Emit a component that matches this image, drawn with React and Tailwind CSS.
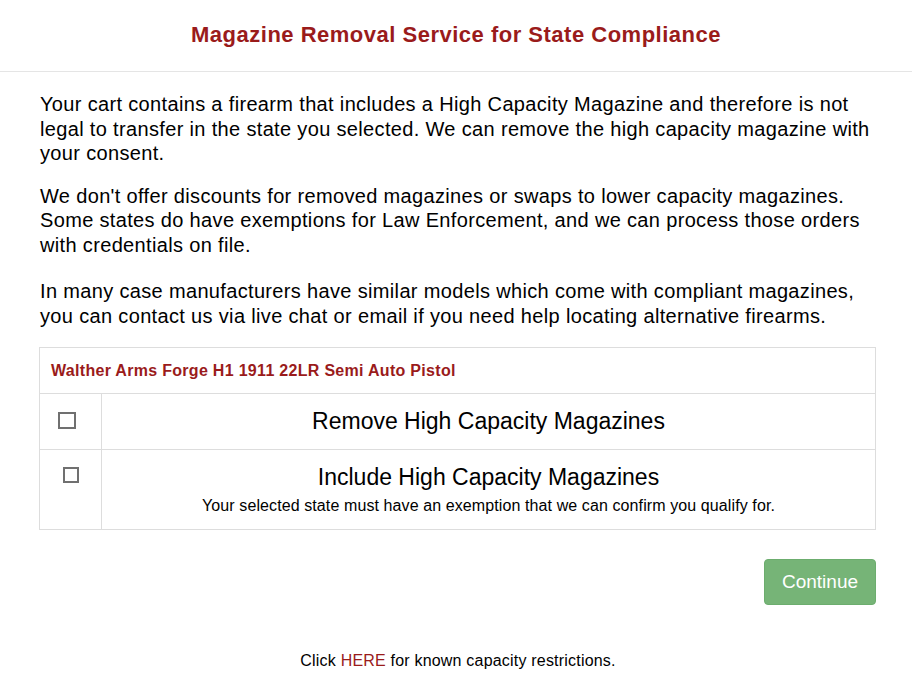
export default function App() {
  return (
    <div className="min-h-screen bg-white text-black" style={{ fontFamily: '"Liberation Sans", Arial, sans-serif' }}>
      {/* Header */}
      <div className="h-[72px] flex items-center justify-center border-b border-[#e5e5e5]">
        <h1 className="text-[22px] tracking-[0.5px] font-bold text-[#9a1b1b] -mt-[3px]">
          Magazine Removal Service for State Compliance
        </h1>
      </div>

      <div className="pl-[40px] pr-[36px] pt-[20px]">
        {/* Intro text */}
        <div className="mr-[-2px]">
          <p className="text-[20px] tracking-[0.34px] leading-[24.5px] mb-[18px]">
            Your cart contains a firearm that includes a High Capacity Magazine and therefore is not legal to transfer in the state you selected. We can remove the high capacity magazine with your consent.
          </p>
          <p className="text-[20px] tracking-[0.34px] leading-[24.5px] mb-[22px]">
            We don't offer discounts for removed magazines or swaps to lower capacity magazines. Some states do have exemptions for Law Enforcement, and we can process those orders with credentials on file.
          </p>
          <p className="text-[20px] tracking-[0.34px] leading-[24.5px] mb-[19px]">
            In many case manufacturers have similar models which come with compliant magazines, you can contact us via live chat or email if you need help locating alternative firearms.
          </p>
        </div>

        {/* Product table */}
        <div className="border border-[#dddddd] ml-[-1px]">
          <div className="h-[46px] flex items-center px-[11px] border-b border-[#dddddd]">
            <span className="text-[16px] tracking-[0.3px] font-bold text-[#9a1b1b]">Walther Arms Forge H1 1911 22LR Semi Auto Pistol</span>
          </div>
          <div className="flex h-[56px] border-b border-[#dddddd]">
            <div className="w-[62px] border-r border-[#dddddd] flex justify-center pt-[18px] pr-[8px]">
              <div className="w-[18px] h-[17px] border-2 border-[#707070] bg-white" />
            </div>
            <div className="flex-1 flex items-center justify-center">
              <span className="text-[23px]">Remove High Capacity Magazines</span>
            </div>
          </div>
          <div className="flex h-[79px]">
            <div className="w-[62px] border-r border-[#dddddd] flex justify-center pt-[17px]">
              <div className="w-[16px] h-[16px] border-2 border-[#707070] bg-white" />
            </div>
            <div className="flex-1 flex flex-col items-center pt-[13px]">
              <span className="text-[23px] leading-[28px]">Include High Capacity Magazines</span>
              <span className="text-[16px] tracking-[0.1px] leading-[20px] mt-[5px]">Your selected state must have an exemption that we can confirm you qualify for.</span>
            </div>
          </div>
        </div>

        <div className="flex justify-end mt-[29px]">
          <button className="w-[112px] h-[46px] rounded-[4px] bg-[#76b477] text-white text-[19px] border border-[#6cad6e]">
            Continue
          </button>
        </div>

        <p className="text-center text-[16px] tracking-[0.2px] leading-[24px] mt-[44px]">
          Click <span className="text-[#9a1b1b]">HERE</span> for known capacity restrictions.
        </p>
      </div>
    </div>
  );
}
